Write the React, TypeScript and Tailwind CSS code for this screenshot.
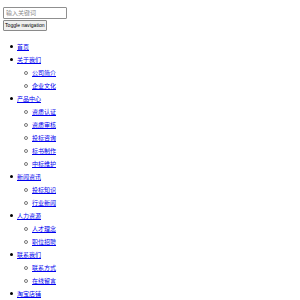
const nav = [
  { name: '首页', children: [] as string[] },
  { name: '关于我们', children: ['公司简介', '企业文化'] },
  { name: '产品中心', children: ['资质认证', '资质审核', '投标咨询', '标书制作', '中标维护'] },
  { name: '新闻资讯', children: ['投标知识', '行业新闻'] },
  { name: '人力资源', children: ['人才理念', '职位招聘'] },
  { name: '联系我们', children: ['联系方式', '在线留言'] },
  { name: '淘宝店铺', children: [] as string[] },
];

const font = "font-['Liberation_Sans','Noto_Sans_CJK_SC',sans-serif]";

const App = () => {
  return (
    <div className={`w-[300px] h-[300px] overflow-hidden bg-white ${font}`}>
      <div className="pt-[7px] pl-[3px] flex flex-col items-start">
        <input
          type="text"
          placeholder="输入关键词"
          className="w-[64px] h-[12px] px-[2px] text-[6px] leading-none border border-[#8f8f8f] rounded-[1px] placeholder:text-[#8a8a8a] outline-none"
        />
        <button className="mt-[1px] h-[11px] px-[1px] text-[5.1px] leading-none text-black bg-[#efefef] border border-[#8a8a8a] rounded-[1px]">
          Toggle navigation
        </button>
      </div>

      <ul className="mt-[9px] flex flex-col">
        {nav.map((item) => (
          <li key={item.name} className="flex flex-col">
            <div className="h-[13px] flex items-center pl-[10px]">
              <span className="w-[3px] h-[3px] rounded-full bg-black" />
              <a href="#" className="ml-[4px] text-[6px] leading-none text-[#0000ee] underline">
                {item.name}
              </a>
            </div>
            {item.children.length > 0 && (
              <ul className="flex flex-col">
                {item.children.map((child) => (
                  <li key={child} className="h-[13px] flex items-center pl-[24px]">
                    <span className="w-[4px] h-[4px] rounded-full border border-[#777]" />
                    <a href="#" className="ml-[4px] text-[6px] leading-none text-[#0000ee] underline">
                      {child}
                    </a>
                  </li>
                ))}
              </ul>
            )}
          </li>
        ))}
      </ul>
    </div>
  );
};

export default App;
